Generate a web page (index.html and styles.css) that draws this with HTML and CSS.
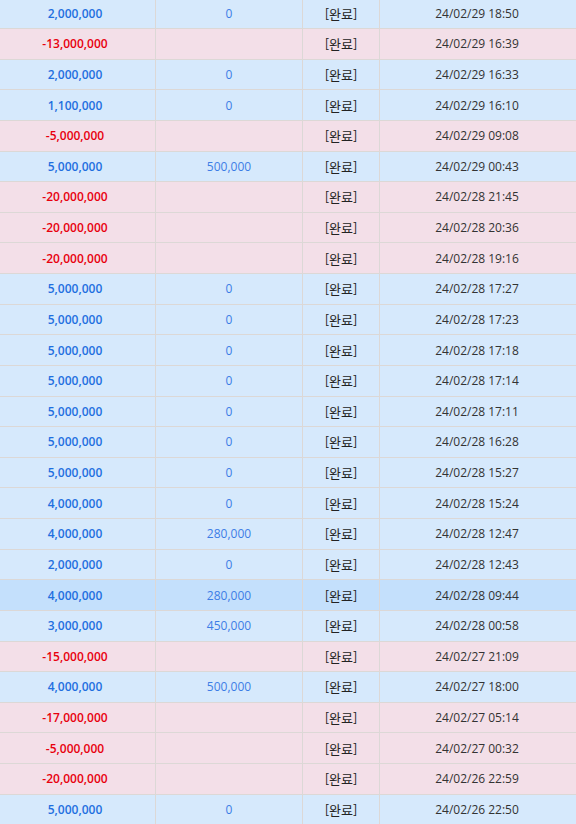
FILE: index.html
```html
<!DOCTYPE html>
<html lang="ko">
<head>
<meta charset="utf-8">
<title>내역</title>
<link rel="stylesheet" href="styles.css">
</head>
<body>
<div class="list">
  <div class="row dep"><div class="c amt">2,000,000</div><div class="c bonus">0</div><div class="c st">[완료]</div><div class="c dt">24/02/29 18:50</div></div>
  <div class="row wd"><div class="c amt">-13,000,000</div><div class="c bonus"></div><div class="c st">[완료]</div><div class="c dt">24/02/29 16:39</div></div>
  <div class="row dep"><div class="c amt">2,000,000</div><div class="c bonus">0</div><div class="c st">[완료]</div><div class="c dt">24/02/29 16:33</div></div>
  <div class="row dep"><div class="c amt">1,100,000</div><div class="c bonus">0</div><div class="c st">[완료]</div><div class="c dt">24/02/29 16:10</div></div>
  <div class="row wd"><div class="c amt">-5,000,000</div><div class="c bonus"></div><div class="c st">[완료]</div><div class="c dt">24/02/29 09:08</div></div>
  <div class="row dep"><div class="c amt">5,000,000</div><div class="c bonus">500,000</div><div class="c st">[완료]</div><div class="c dt">24/02/29 00:43</div></div>
  <div class="row wd"><div class="c amt">-20,000,000</div><div class="c bonus"></div><div class="c st">[완료]</div><div class="c dt">24/02/28 21:45</div></div>
  <div class="row wd"><div class="c amt">-20,000,000</div><div class="c bonus"></div><div class="c st">[완료]</div><div class="c dt">24/02/28 20:36</div></div>
  <div class="row wd"><div class="c amt">-20,000,000</div><div class="c bonus"></div><div class="c st">[완료]</div><div class="c dt">24/02/28 19:16</div></div>
  <div class="row dep"><div class="c amt">5,000,000</div><div class="c bonus">0</div><div class="c st">[완료]</div><div class="c dt">24/02/28 17:27</div></div>
  <div class="row dep"><div class="c amt">5,000,000</div><div class="c bonus">0</div><div class="c st">[완료]</div><div class="c dt">24/02/28 17:23</div></div>
  <div class="row dep"><div class="c amt">5,000,000</div><div class="c bonus">0</div><div class="c st">[완료]</div><div class="c dt">24/02/28 17:18</div></div>
  <div class="row dep"><div class="c amt">5,000,000</div><div class="c bonus">0</div><div class="c st">[완료]</div><div class="c dt">24/02/28 17:14</div></div>
  <div class="row dep"><div class="c amt">5,000,000</div><div class="c bonus">0</div><div class="c st">[완료]</div><div class="c dt">24/02/28 17:11</div></div>
  <div class="row dep"><div class="c amt">5,000,000</div><div class="c bonus">0</div><div class="c st">[완료]</div><div class="c dt">24/02/28 16:28</div></div>
  <div class="row dep"><div class="c amt">5,000,000</div><div class="c bonus">0</div><div class="c st">[완료]</div><div class="c dt">24/02/28 15:27</div></div>
  <div class="row dep"><div class="c amt">4,000,000</div><div class="c bonus">0</div><div class="c st">[완료]</div><div class="c dt">24/02/28 15:24</div></div>
  <div class="row dep"><div class="c amt">4,000,000</div><div class="c bonus">280,000</div><div class="c st">[완료]</div><div class="c dt">24/02/28 12:47</div></div>
  <div class="row dep"><div class="c amt">2,000,000</div><div class="c bonus">0</div><div class="c st">[완료]</div><div class="c dt">24/02/28 12:43</div></div>
  <div class="row dep hl"><div class="c amt">4,000,000</div><div class="c bonus">280,000</div><div class="c st">[완료]</div><div class="c dt">24/02/28 09:44</div></div>
  <div class="row dep"><div class="c amt">3,000,000</div><div class="c bonus">450,000</div><div class="c st">[완료]</div><div class="c dt">24/02/28 00:58</div></div>
  <div class="row wd"><div class="c amt">-15,000,000</div><div class="c bonus"></div><div class="c st">[완료]</div><div class="c dt">24/02/27 21:09</div></div>
  <div class="row dep"><div class="c amt">4,000,000</div><div class="c bonus">500,000</div><div class="c st">[완료]</div><div class="c dt">24/02/27 18:00</div></div>
  <div class="row wd"><div class="c amt">-17,000,000</div><div class="c bonus"></div><div class="c st">[완료]</div><div class="c dt">24/02/27 05:14</div></div>
  <div class="row wd"><div class="c amt">-5,000,000</div><div class="c bonus"></div><div class="c st">[완료]</div><div class="c dt">24/02/27 00:32</div></div>
  <div class="row wd"><div class="c amt">-20,000,000</div><div class="c bonus"></div><div class="c st">[완료]</div><div class="c dt">24/02/26 22:59</div></div>
  <div class="row dep"><div class="c amt">5,000,000</div><div class="c bonus">0</div><div class="c st">[완료]</div><div class="c dt">24/02/26 22:50</div></div>
</div>
</body>
</html>
```
FILE: styles.css
```css
html, body {
  margin: 0;
  padding: 0;
  background: #d6e9fc;
  overflow: hidden;
}
body {
  font-family: "Open Sans", "Noto Sans CJK KR", sans-serif;
  font-size: 12px;
  color: #333;
}
.list {
  margin-top: -1.64px;
}
.row {
  display: grid;
  grid-template-columns: 156px 147px 77px 1fr;
  height: 30.64px;
  box-sizing: border-box;
  border-bottom: 1px solid #dcd8d6;
}
.row.dep { background: #d6e9fc; }
.row.wd { background: #f3dfe8; }
.row.hl { background: #c4e0fc; }
.c {
  display: flex;
  align-items: center;
  justify-content: center;
  border-right: 1px solid #dcd8d6;
  box-sizing: border-box;
  white-space: nowrap;
}
.c.dt { border-right: none; padding-right: 2px; }
.amt {
  font-weight: 600;
  color: #1f6fe0;
  padding-right: 5px;
}
.wd .amt {
  color: #e8000e;
}
.bonus {
  color: #3d7de6;
}
.st {
  font-family: "Noto Sans CJK KR", sans-serif;
  font-size: 13px;
  color: #222;
}
.dt {
  color: #333;
}
```
